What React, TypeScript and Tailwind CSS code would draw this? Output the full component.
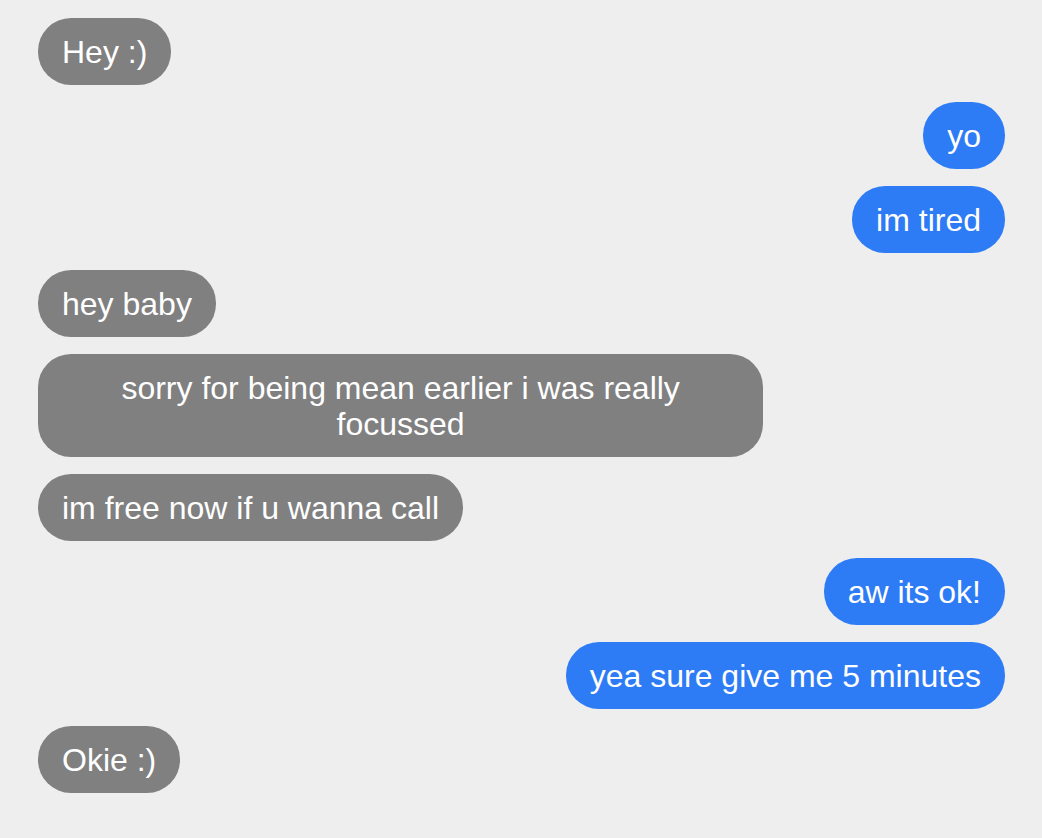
const messages: { from: 'them' | 'me'; text: string }[] = [
    {from: 'them', text: 'Hey :)'},
    {from: 'me', text: 'yo'},
    {from: 'me', text: 'im tired'},
    {from: 'them', text: 'hey baby'},
    {from: 'them', text: 'sorry for being mean earlier i was really focussed'},
    {from: 'them', text: 'im free now if u wanna call'},
    {from: 'me', text: 'aw its ok!'},
    {from: 'me', text: 'yea sure give me 5 minutes'},
    {from: 'them', text: 'Okie :)'},
];

function Bubble({from, text}: { from: 'them' | 'me'; text: string }) {
    const side = from === 'me' ? 'self-end bg-[#2e7bf6]' : 'self-start bg-[#808080]';
    return (
        <div
            className={`${side} max-w-[75%] rounded-[33px] px-6 py-[15.5px] text-center text-[32px] leading-[36px] text-white`}>
            {text}
        </div>
    );
}

export default function App() {
    return (
        <div className="min-h-screen bg-[#eeeeee] font-['Liberation_Sans',Arial,sans-serif]">
            <div className="flex flex-col gap-[17px] pl-[38px] pr-[37px] pt-[18px] pb-[40px]">
                {messages.map((m, i) => (
                    <Bubble key={i} from={m.from} text={m.text}/>
                ))}
            </div>
        </div>
    );
}
